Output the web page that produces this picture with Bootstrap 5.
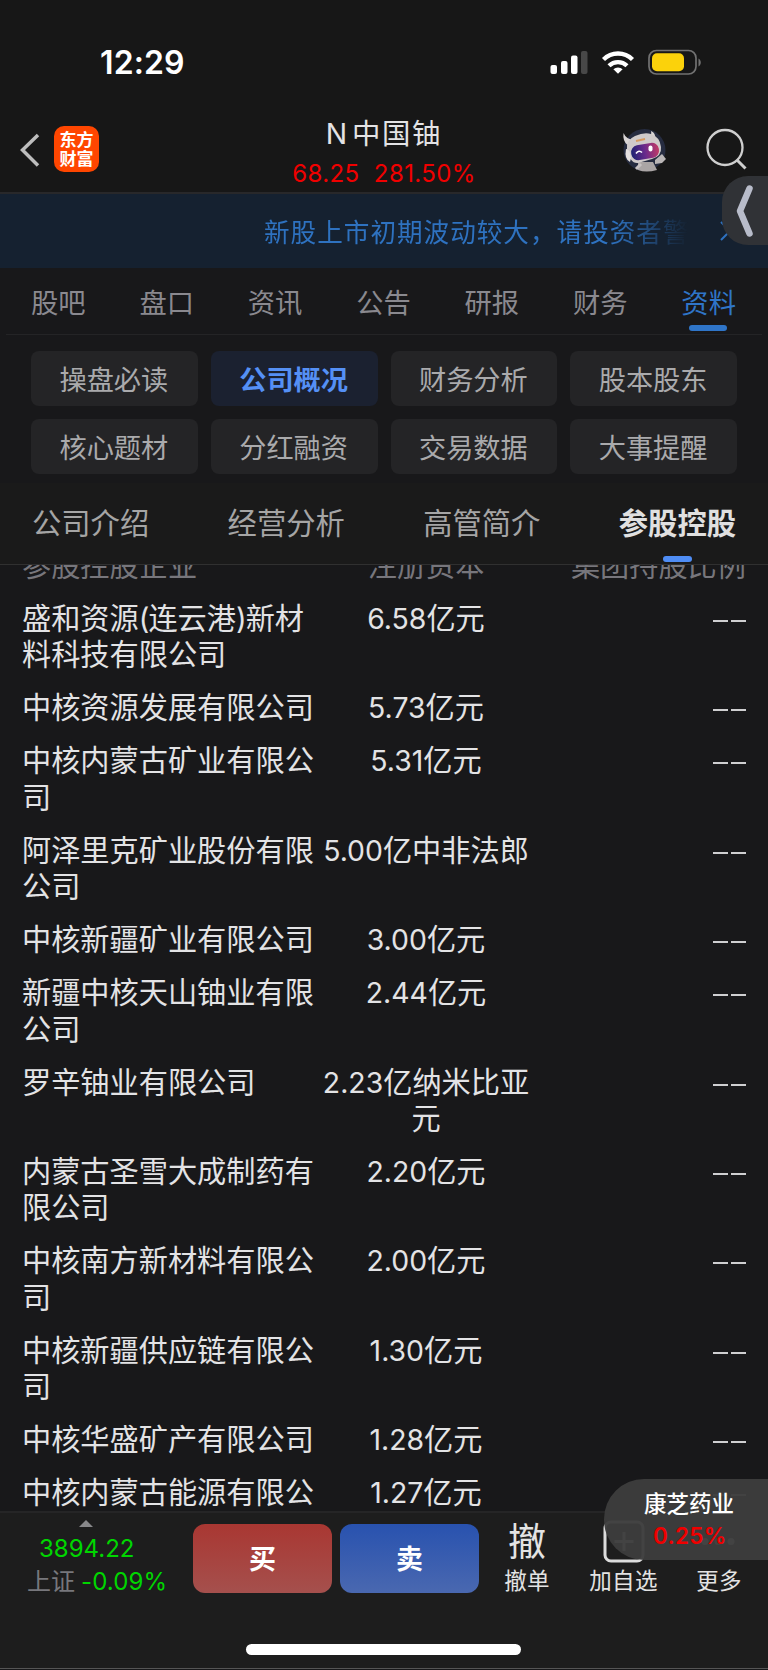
<!DOCTYPE html>
<html lang="zh-CN">
<head>
<meta charset="utf-8">
<meta name="viewport" content="width=device-width, initial-scale=1">
<title>N中国铀</title>
<link href="https://cdn.jsdelivr.net/npm/bootstrap@5.3.0/dist/css/bootstrap.min.css" rel="stylesheet">
<style>
body{background:#18181a;color:#e3e3e5;font-family:Inter,"Noto Sans CJK SC",sans-serif;width:768px;height:1670px;overflow:hidden;line-height:1}
.phone{width:768px;height:1670px}
.statusbar{height:104px;background:#171717;padding:0 67px 0 100px}
.clock{font-size:32px;font-weight:600;color:#fff;letter-spacing:.1px;margin-top:47px;line-height:32px}
.status-icons{margin-top:48px}
.titlebar{height:88px;background:#171717}
.title-left{width:240px}
.logo-tile{width:45px;height:46px;margin-top:22px;border-radius:10px;background:#ff4600;color:#fff;font-size:17px;font-weight:700;line-height:18.5px;padding-top:5px}
.stock-name{font-size:28.4px;letter-spacing:1.7px;line-height:34px;padding-top:13px}
.stock-name span{margin-right:3px}
.stock-quote{font-size:24px;letter-spacing:.4px;color:#f00000;line-height:28px;margin-top:9px}
.notice{height:76px;background:#152130;border-top:2px solid #28282a;color:#2e72c0}
.notice-text{font-size:25.6px;letter-spacing:1px;margin-left:264px;padding-top:3px;width:424px;overflow:hidden;white-space:nowrap;line-height:40px;-webkit-mask-image:linear-gradient(90deg,#000 82%,transparent 100%);mask-image:linear-gradient(90deg,#000 82%,transparent 100%)}
.edge-handle{right:0;top:176px;width:46px;height:69px;border-radius:26px 0 0 26px;background:#303236}
.main-tabs{height:67px;margin:0 6px;padding:5px 26px 0 25px;border-bottom:1px solid #242426;font-size:27.3px;color:#8a898f}
.main-tabs a,.sub-tabs a{color:inherit;text-decoration:none;position:relative;line-height:40px}
.main-tabs a.active{color:#2f75c8}
.main-tabs a.active::after{content:"";position:absolute;left:8px;width:38px;height:6px;border-radius:3px;background:#2f75c8;bottom:-7px}
.chips{display:grid;grid-template-columns:repeat(4,1fr);gap:13px;padding:16px 31px 9px;font-size:27.2px;color:#aaaaac}
.chip{height:55px;border-radius:8px;background:#242426;padding:4px 1px 0 0}
.chip.active{background:#1b2130;color:#5590f5;font-weight:600}
.sub-tabs{height:82px;background:#1a1a1a;border-bottom:1px solid #303030;padding:0 32px;font-size:29.3px;color:#a5a5a5}
.sub-tabs a.active{color:#e0e0e0;font-weight:600}
.sub-tabs a.active::after{content:"";position:absolute;left:44px;width:29px;height:6px;border-radius:3px;background:#4f8df5;bottom:-18px}
.holdings{height:946px;overflow:hidden;font-size:29.2px;line-height:36.3px}
.holdings-body{margin-top:-25.500px}
.h-row{display:grid;grid-template-columns:298px 212px 1fr;padding:8.4px 22px}
.h-row>:nth-child(2){text-align:center}
.h-row>:nth-child(3){text-align:right}
.h-row.head{color:#77767c}
.num{font-size:28.400px}
.paren{letter-spacing:-1px}
.dash{display:inline-block;width:15px;height:2px;background:#cfcfd1;margin-left:3px;vertical-align:7px}
.bottombar{height:158px;background:#1d1d1d;border-top:2px solid #252526;border-bottom:1px solid #555}
.idx{width:193px;color:#00d600;font-size:24px}
.idx-value{padding-left:39px;line-height:32px;margin-top:4px}
.idx-change{padding-left:27px;line-height:34px;letter-spacing:.1px}
.idx-change span{color:#77777c;margin-right:-1px}
.trade{width:139px;height:69px;border-radius:12px;color:#fff;font-size:27px;font-weight:600;margin-top:11px;border:0;padding:1px 0 0}
.buy{background:linear-gradient(#a93732,#a5504d)}
.sell{background:linear-gradient(#2852af,#4a68b0);margin-left:8px}
.tool{color:#e3e3e3;font-size:22.500px}
.tool-glyph{font-size:38px;line-height:56px}
.tool-label{line-height:24px;letter-spacing:.3px}
.home{left:246px;top:1644px;width:275px;height:11px;border-radius:6px;background:#fff}
.floater{right:0;top:1479px;width:164px;height:81px;border-radius:40px 0 0 40px;background:rgba(60,60,60,.96)}
.floater-name{padding:9px 0 0 40px;color:#fff;font-size:22.500px;font-weight:500;line-height:32px}
.floater-rate{padding-left:49px;color:#f00000;font-size:22.500px;font-weight:600;line-height:32px;letter-spacing:.3px}
</style>
</head>
<body>
<div class="phone position-relative d-flex flex-column">
  <header class="statusbar d-flex justify-content-between align-items-start">
    <div class="clock">12:29</div>
    <svg class="status-icons" width="151" height="28" viewBox="550 48 151 28">
      <g fill="#fff"><rect x="550.5" y="65" width="6.5" height="9" rx="2"/><rect x="561" y="61" width="6.5" height="13" rx="2"/><rect x="571" y="55.500" width="6.500" height="18.500" rx="2"/><rect x="581" y="51" width="6.500" height="23" rx="2" fill="#484848"/>
      <path d="M618 73.800l-4.600-4.500a6.800 6.800 0 0 1 9.200 0z"/></g>
      <g fill="none" stroke="#fff" stroke-width="4.300"><path d="M603.500 59.500a20.500 20.500 0 0 1 29 0"/><path d="M609 65.800a12.800 12.800 0 0 1 18 0"/></g>
      <rect x="649" y="50.500" width="47" height="23.500" rx="7.500" fill="none" stroke="#727272" stroke-width="1.700"/><rect x="652" y="53.300" width="32" height="18" rx="5" fill="#fbd20b"/><path d="M698.500 58.500c3 1.500 3 6.500 0 8z" fill="#727272"/>
    </svg>
  </header>
  <div class="titlebar d-flex justify-content-between">
    <div class="title-left d-flex">
      <svg width="54" height="88" viewBox="0 104 54 88" fill="none" stroke="#bdbdbd" stroke-width="3.500"><path d="M38 135L22.500 150L38 165.500"/></svg>
      <div class="logo-tile text-center">东方<br>财富</div>
    </div>
    <div class="text-center"><div class="stock-name"><span>N</span>中国铀</div><div class="stock-quote">68.25&nbsp; 281.50%</div></div>
    <svg width="240" height="88" viewBox="528 104 240 88" fill="none">
      <defs><linearGradient id="visor"><stop stop-color="#1d2272"/><stop offset=".5" stop-color="#6a2a8c"/><stop offset="1" stop-color="#c23a66"/></linearGradient></defs>
      <circle cx="644.500" cy="150" r="21" fill="#262c40"/>
      <path d="M638 162h15l4 8q-11 3-19 0z" fill="#aaa5a5"/><path d="M655 160l7-6 4 5-4 4-7 1z" fill="#bab6b6"/><path d="M641 164l-5 5" stroke="#c7c2c2" stroke-width="3"/>
      <path d="M623.500 133q-1 8 4 12l7-5q-8 0-11-7z" fill="#d9d5d4"/><path d="M651 131q5 2 4 8l-6-2q3-2 2-6z" fill="#d9d5d4"/>
      <path d="M627 149q-1-9 8-13 9-4 16-2 9 3 10 13 1 9-9 12l-14 4q-8 1-11-14z" fill="#cfcaca"/>
      <path d="M626 149q4 0 5 9l-1 4q-6-3-4-13z" fill="#e4e0df"/>
      <rect x="631" y="144" width="28" height="15" rx="7" transform="rotate(-10 645 151)" fill="url(#visor)"/><path d="M636 153.500q3-4 6-1" stroke="#fff" stroke-width="1.600"/><rect x="648.500" y="145.500" width="4" height="6" rx="2" fill="#fff"/><path d="M636 141l9-2" stroke="#d69a61" stroke-width="2"/>
      <circle cx="725" cy="147.500" r="17.500" stroke="#cfcfcf" stroke-width="2.300"/><path d="M737 160l8.500 8.500" stroke="#cfcfcf" stroke-width="3"/>
    </svg>
  </div>
  <div class="notice d-flex align-items-center">
    <div class="notice-text">新股上市初期波动较大，请投资者警示</div>
    <svg class="ms-auto me-3" width="32" height="20" viewBox="0 0 32 20" stroke="#2e72c0" stroke-width="2"><path d="M1 1l18 18M19 1L1 19"/></svg>
  </div>
  <nav class="main-tabs d-flex justify-content-between align-items-center"><a>股吧</a><a>盘口</a><a>资讯</a><a>公告</a><a>研报</a><a>财务</a><a class="active">资料</a></nav>
  <div class="chips">
    <div class="chip d-flex align-items-center justify-content-center">操盘必读</div><div class="chip active d-flex align-items-center justify-content-center">公司概况</div><div class="chip d-flex align-items-center justify-content-center">财务分析</div><div class="chip d-flex align-items-center justify-content-center">股本股东</div>
    <div class="chip d-flex align-items-center justify-content-center">核心题材</div><div class="chip d-flex align-items-center justify-content-center">分红融资</div><div class="chip d-flex align-items-center justify-content-center">交易数据</div><div class="chip d-flex align-items-center justify-content-center">大事提醒</div>
  </div>
  <nav class="sub-tabs d-flex justify-content-between align-items-center"><a>公司介绍</a><a>经营分析</a><a>高管简介</a><a class="active">参股控股</a></nav>
  <main class="holdings"><div class="holdings-body">
    <div class="h-row head"><div>参股控股企业</div><div>注册资本</div><div>集团持股比例</div></div>
    <div class="h-row"><div>盛和资源<span class="paren">(</span>连云港<span class="paren">)</span>新材料科技有限公司</div><div><span class="num">6.58</span>亿元</div><div><i class="dash"></i><i class="dash"></i></div></div>
    <div class="h-row"><div>中核资源发展有限公司</div><div><span class="num">5.73</span>亿元</div><div><i class="dash"></i><i class="dash"></i></div></div>
    <div class="h-row"><div>中核内蒙古矿业有限公司</div><div><span class="num">5.31</span>亿元</div><div><i class="dash"></i><i class="dash"></i></div></div>
    <div class="h-row"><div>阿泽里克矿业股份有限公司</div><div><span class="num">5.00</span>亿中非法郎</div><div><i class="dash"></i><i class="dash"></i></div></div>
    <div class="h-row"><div>中核新疆矿业有限公司</div><div><span class="num">3.00</span>亿元</div><div><i class="dash"></i><i class="dash"></i></div></div>
    <div class="h-row"><div>新疆中核天山铀业有限公司</div><div><span class="num">2.44</span>亿元</div><div><i class="dash"></i><i class="dash"></i></div></div>
    <div class="h-row"><div>罗辛铀业有限公司</div><div><span class="num">2.23</span>亿纳米比亚元</div><div><i class="dash"></i><i class="dash"></i></div></div>
    <div class="h-row"><div>内蒙古圣雪大成制药有限公司</div><div><span class="num">2.20</span>亿元</div><div><i class="dash"></i><i class="dash"></i></div></div>
    <div class="h-row"><div>中核南方新材料有限公司</div><div><span class="num">2.00</span>亿元</div><div><i class="dash"></i><i class="dash"></i></div></div>
    <div class="h-row"><div>中核新疆供应链有限公司</div><div><span class="num">1.30</span>亿元</div><div><i class="dash"></i><i class="dash"></i></div></div>
    <div class="h-row"><div>中核华盛矿产有限公司</div><div><span class="num">1.28</span>亿元</div><div><i class="dash"></i><i class="dash"></i></div></div>
    <div class="h-row"><div>中核内蒙古能源有限公</div><div><span class="num">1.27</span>亿元</div><div><i class="dash"></i><i class="dash"></i></div></div>
  </div></main>
  <footer class="bottombar d-flex align-items-start">
    <div class="idx">
      <svg class="d-block" width="193" height="16" viewBox="0 0 193 16"><path d="M79 14l7-7 7 7z" fill="#88888a"/></svg>
      <div class="idx-value">3894.22</div>
      <div class="idx-change"><span>上证</span> -0.09%</div>
    </div>
    <button class="trade buy">买</button><button class="trade sell">卖</button>
    <div class="tool text-center" style="width:96px"><div class="tool-glyph">撤</div><div class="tool-label">撤单</div></div>
    <div class="tool text-center" style="width:97px"><svg class="d-block mx-auto" width="42" height="56" viewBox="0 0 42 56" fill="none" stroke="#dcdcdc" stroke-width="3"><rect x="2" y="9" width="38" height="39" rx="6"/><path d="M21 19v19M11.500 28.500h19"/></svg><div class="tool-label">加自选</div></div>
    <div class="tool text-center" style="width:94px"><svg class="d-block mx-auto" width="42" height="56" viewBox="0 0 42 56" fill="#dcdcdc"><circle cx="7" cy="28.500" r="3.500"/><circle cx="20" cy="28.500" r="3.500"/><circle cx="33" cy="28.500" r="3.500"/></svg><div class="tool-label">更多</div></div>
  </footer>
  <div class="edge-handle position-absolute"><svg width="46" height="69" viewBox="722 176 46 69" fill="none" stroke="#b8bcca" stroke-width="6.500" stroke-linecap="round" stroke-linejoin="round"><path d="M749.500 188.500L740 211L749.500 233.500"/></svg></div>
  <div class="floater position-absolute"><div class="floater-name">康芝药业</div><div class="floater-rate">0.25%</div></div>
  <div class="home position-absolute"></div>
</div>
<script src="https://cdn.jsdelivr.net/npm/bootstrap@5.3.0/dist/js/bootstrap.bundle.min.js"></script>
</body>
</html>
